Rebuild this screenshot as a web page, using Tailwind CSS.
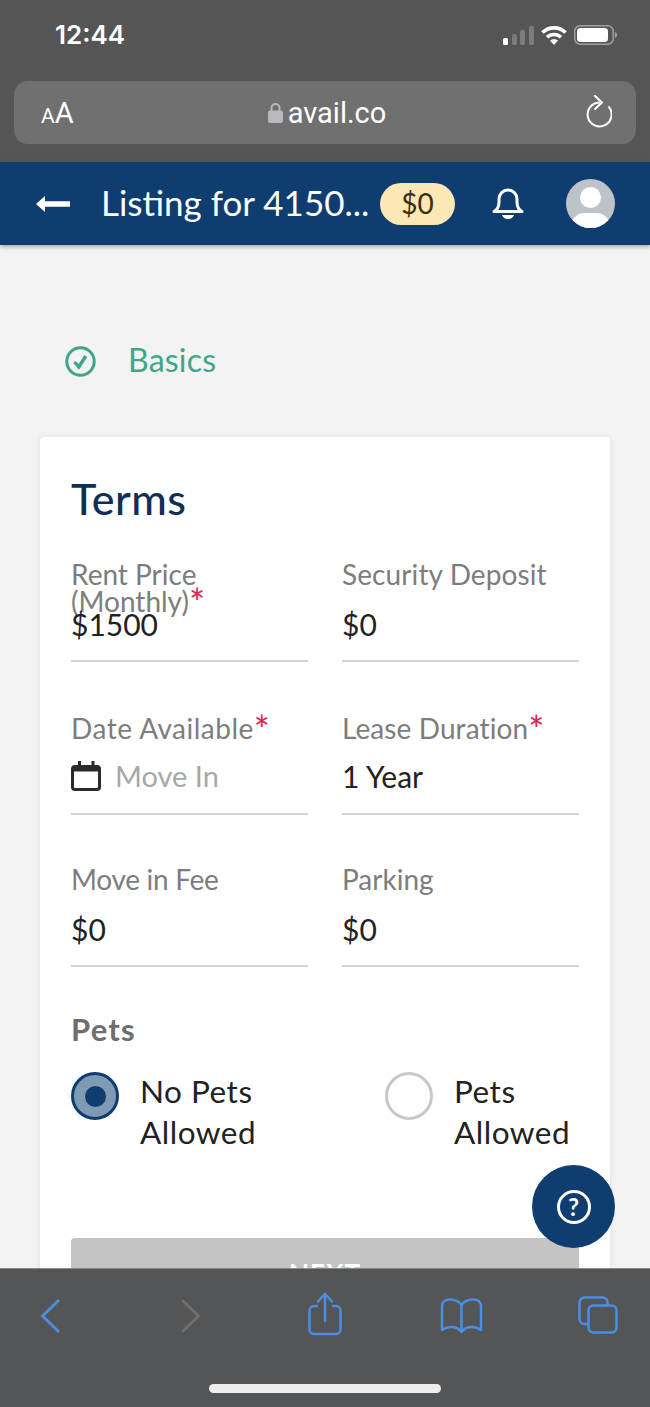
<!DOCTYPE html>
<html lang="en">
<head>
<meta charset="UTF-8">
<meta name="viewport" content="width=device-width, initial-scale=1.0">
<title>Listing for 4150</title>
<script src="https://cdn.jsdelivr.net/npm/@tailwindcss/browser@4"></script>
</head>
<body class="bg-[#f3f3f3]">
<div class="relative flex flex-col h-[1407px] w-[650px] overflow-hidden font-['Lato',sans-serif]">

  <!-- browser top -->
  <div class="h-[162px] shrink-0 bg-[#555555] px-[14px]">
    <div class="h-[81px] flex items-start justify-between pt-[19px] pl-[41px] pr-[20px]">
      <span class="text-white text-[26px] leading-[32px] font-semibold font-['Inter',sans-serif]">12:44</span>
      <div class="flex items-center gap-[7px] h-[32px] -mr-[1px]">
        <svg width="31" height="19" viewBox="0 0 31 19"><rect x="0" y="12" width="5" height="7" rx="1.5" fill="#fff"/><rect x="9" y="8" width="5" height="11" rx="1.5" fill="#7c7c7c"/><rect x="17" y="4" width="5" height="15" rx="1.5" fill="#7c7c7c"/><rect x="26" y="0" width="5" height="19" rx="1.5" fill="#7c7c7c"/></svg>
        <svg width="26" height="20" viewBox="0 0 26 20" fill="none" stroke="#fff" stroke-width="3.600"><path d="M1.500 7.500a16.500 16.500 0 0 1 23 0"/><path d="M6 12.300a10 10 0 0 1 14 0"/><path d="M13 20 9 15.600a6 6 0 0 1 8 0z" fill="#fff" stroke="none"/></svg>
        <svg width="43" height="20" viewBox="0 0 43 20" fill="none"><rect x="0.75" y="0.75" width="38.500" height="18.5" rx="5.5" stroke="#a0a0a0" stroke-width="1.5"/><rect x="3" y="3" width="31" height="14" rx="3.500" fill="#fff"/><path d="M41 7v6c1.200-.4 2-1.600 2-3s-.8-2.600-2-3z" fill="#a0a0a0"/></svg>
      </div>
    </div>
    <div class="relative h-[63px] rounded-[14px] bg-[#707070] flex items-center justify-center text-white">
      <span class="absolute left-[27px] top-[17px] text-[29px] leading-[30px] font-['Roboto',sans-serif]"><span class="text-[21px]">A</span>A</span>
      <svg class="ml-[4px] mr-[5px]" width="15" height="21" viewBox="0 0 15 21" fill="none"><path d="M3.500 9V6a4 4 0 0 1 8 0v3" stroke="#b9b9bd" stroke-width="2"/><rect x="0" y="8.500" width="15" height="12.500" rx="2" fill="#b9b9bd"/></svg>
      <span class="text-[29px] leading-[34px] font-['Roboto',sans-serif] font-normal">avail.co</span>
      <svg class="absolute right-[24px] top-[14px]" width="28" height="33" viewBox="0 0 28 33" fill="none" stroke="#fff" stroke-width="2"><path d="M15 7.500A12 12 0 1 0 25 12" stroke-linecap="round"/><path d="M11 1 18 7.500 11 14" stroke-linecap="round" stroke-linejoin="round"/></svg>
    </div>
  </div>

  <!-- app header -->
  <div class="relative z-10 h-[83px] shrink-0 bg-[#0f3d70] shadow-[0_2px_4px_rgba(0,0,0,0.3)] flex items-center text-white">
    <svg class="ml-[36px]" width="34" height="16" viewBox="0 0 34 16" fill="#fff"><path d="M0 8 9 0V5.200H34V10.800H9V16z"/></svg>
    <span class="ml-[31px] w-[280px] -mt-[4px] text-[35px] leading-[40px] whitespace-nowrap">Listing for 4150...</span>
    <span class="-ml-[1px] w-[75px] h-[42px] rounded-full bg-[#fbe8b4] text-[#3c2f12] text-[28px] leading-[40px] text-center">$0</span>
    <svg class="ml-[37px]" width="32" height="31" viewBox="0 0 32 31" fill="none"><path d="M2 23.500C6 21.500 7 18 7 14v-3a9 9 0 0 1 18 0v3c0 4 1 7.500 5 9.500z" stroke="#fff" stroke-width="3" stroke-linejoin="round"/><path d="M10 27h12c-1 2.800-3 4-6 4s-5-1.200-6-4z" fill="#fff"/></svg>
    <div class="relative ml-[42px] w-[49px] h-[49px] rounded-full bg-[#bdc3c9] overflow-hidden">
      <div class="mx-auto mt-[8px] w-[21px] h-[21px] rounded-full bg-white"></div>
      <div class="absolute left-[4px] top-[34px] w-[41px] h-[30px] rounded-full bg-white"></div>
    </div>
  </div>

  <!-- page -->
  <div class="flex-1 min-h-0 overflow-hidden px-[40px]">
    <div class="flex items-center h-[36px] mt-[98px] pl-[25px] text-[#3fa68a]">
      <svg width="31" height="31" viewBox="0 0 31 31" fill="none" stroke="#3fa68a"><circle cx="15.500" cy="15.500" r="13.700" stroke-width="3"/><path d="M9.500 16l4.300 5 7-11" stroke-width="3.400"/></svg>
      <span class="ml-[32px] -mt-[2px] text-[32px] leading-[36px] tracking-[0.2px]">Basics</span>
    </div>

    <div class="mt-[58px] bg-white rounded-[4px] shadow-[0_0_6px_rgba(0,0,0,0.08)] px-[31px] pt-[38px] pb-[40px]">
      <h1 class="text-[43px] leading-[48px] font-medium tracking-[0.5px] text-[#0f2f57]">Terms</h1>

      <div class="mt-[39px] grid grid-cols-2 gap-x-[34px] gap-y-[53px]">
        <div class="h-[100px] border-b-2 border-[#d2d2d2]">
          <label class="block -mt-[1px] h-[27px] text-[28px] leading-[27px] text-[#7d7d7d]">Rent Price (Monthly)<span class="relative top-[5px] text-[#e0224f] text-[38px] leading-[0]">*</span></label>
          <div class="mt-[16px] h-[40px] text-[30px] leading-[40px] text-[#222]">$1500</div>
        </div>
        <div class="h-[100px] border-b-2 border-[#d2d2d2]">
          <label class="block -mt-[1px] h-[27px] text-[28px] leading-[27px] tracking-[0.1px] text-[#7d7d7d]">Security Deposit</label>
          <div class="mt-[16px] h-[40px] text-[30px] leading-[40px] text-[#222]">$0</div>
        </div>
        <div class="h-[100px] border-b-2 border-[#d2d2d2]">
          <label class="block h-[27px] text-[28px] leading-[27px] tracking-[0.5px] text-[#7d7d7d]">Date Available<span class="relative top-[5px] text-[#e0224f] text-[38px] leading-[0]">*</span></label>
          <div class="mt-[14px] h-[40px] flex items-center text-[29px] leading-[40px] text-[#a8a8a8]">
            <svg width="30" height="30" viewBox="0 0 30 30" fill="none"><rect x="1.500" y="5.500" width="27" height="23" rx="2.500" stroke="#2b2b2b" stroke-width="3"/><path d="M1.500 8.500h27" stroke="#2b2b2b" stroke-width="4"/><path d="M8.500 0v7M22 0v7" stroke="#2b2b2b" stroke-width="3"/></svg>
            <span class="ml-[14px]">Move In</span>
          </div>
        </div>
        <div class="h-[100px] border-b-2 border-[#d2d2d2]">
          <label class="block h-[27px] text-[28px] leading-[27px] tracking-[0.1px] text-[#7d7d7d]">Lease Duration<span class="relative top-[5px] text-[#e0224f] text-[38px] leading-[0]">*</span></label>
          <div class="mt-[14px] h-[40px] text-[30px] leading-[40px] text-[#222]">1 Year</div>
        </div>
        <div class="h-[99px] border-b-2 border-[#d2d2d2]">
          <label class="block -mt-[2px] h-[27px] text-[28px] leading-[27px] -tracking-[0.3px] text-[#7d7d7d]">Move in Fee</label>
          <div class="mt-[16px] h-[40px] text-[30px] leading-[40px] text-[#222]">$0</div>
        </div>
        <div class="h-[99px] border-b-2 border-[#d2d2d2]">
          <label class="block -mt-[2px] h-[27px] text-[28px] leading-[27px] text-[#7d7d7d]">Parking</label>
          <div class="mt-[16px] h-[40px] text-[30px] leading-[40px] text-[#222]">$0</div>
        </div>
      </div>

      <div class="mt-[44px] text-[31px] leading-[36px] font-bold tracking-[1.2px] text-[#6e6e6e]">Pets</div>
      <div class="mt-[25px] flex text-[31.5px] leading-[41px] tracking-[0.5px] text-[#222]">
        <div class="w-[314px] flex">
          <span class="shrink-0 w-[48px] h-[48px] rounded-full border-[3px] border-[#0f3d70] bg-[#8099b5] flex items-center justify-center"><span class="w-[21px] h-[21px] rounded-full bg-[#0f3d70]"></span></span>
          <span class="ml-[21px] -mt-[1px]">No Pets<br>Allowed</span>
        </div>
        <div class="flex">
          <span class="shrink-0 w-[48px] h-[48px] rounded-full border-[3px] border-[#c8c8c8] bg-white"></span>
          <span class="ml-[21px] -mt-[1px]">Pets<br>Allowed</span>
        </div>
      </div>

      <button class="mt-[85px] w-full h-[70px] rounded-[4px] bg-[#c4c4c4] text-white text-[26px] font-bold tracking-[1px]">NEXT</button>
    </div>
  </div>

  <!-- help -->
  <div class="absolute z-10 left-[532px] top-[1165px] w-[83px] h-[83px] rounded-full bg-[#0f3d70] flex items-center justify-center">
    <span class="w-[34px] h-[34px] rounded-full border-[3px] border-white text-white text-[24px] leading-[28px] font-bold text-center">?</span>
  </div>

  <!-- browser bottom -->
  <div class="relative z-20 h-[139px] shrink-0 bg-[#545556] border-t border-[#8a8a8a]">
    <div class="relative h-[80px]">
      <svg class="absolute left-[40px] top-[30px]" width="20" height="34" viewBox="0 0 20 34" fill="none" stroke="#4a8fe3" stroke-width="3"><path d="M18 2 2.500 17 18 32" stroke-linecap="round" stroke-linejoin="round"/></svg>
      <svg class="absolute left-[181px] top-[30px]" width="20" height="34" viewBox="0 0 20 34" fill="none" stroke="#6e6e6e" stroke-width="3"><path d="M2 2 17.500 17 2 32" stroke-linecap="round" stroke-linejoin="round"/></svg>
      <svg class="absolute left-[308px] top-[23px]" width="34" height="44" viewBox="0 0 34 44" fill="none" stroke="#4a8fe3" stroke-width="2.500"><path d="M10 14H6a4.500 4.500 0 0 0-4.500 4.500v19A4.500 4.500 0 0 0 6 42h22a4.500 4.500 0 0 0 4.500-4.500v-19A4.500 4.500 0 0 0 28 14h-4"/><path d="M17 29V2M10 9.500 17 2 24 9.500" stroke-linecap="round" stroke-linejoin="round"/></svg>
      <svg class="absolute left-[440px] top-[29px]" width="43" height="36" viewBox="0 0 43 36" fill="none" stroke="#4a8fe3" stroke-width="2.500"><path d="M21.500 7C20 4 15 1.500 10 1.500 5 1.500 2 4 2 8V32C8 27.500 17 28 21.500 34 26 28 35 27.500 41 32V8C41 4 38 1.500 33 1.500 28 1.500 23 4 21.500 7z" stroke-linejoin="round"/><path d="M21.500 7v27"/></svg>
      <svg class="absolute left-[578px] top-[27px]" width="40" height="38" viewBox="0 0 40 38" fill="none" stroke="#4a8fe3" stroke-width="2.500"><rect x="10.500" y="9.500" width="28" height="27" rx="5"/><path d="M10.500 28H6.500a5 5 0 0 1-5-5V6.500a5 5 0 0 1 5-5H24.500a5 5 0 0 1 5 5v3"/></svg>
    </div>
    <div class="mx-auto mt-[35px] w-[232px] h-[9px] rounded-full bg-[#eeeeee]"></div>
  </div>
</div>
</body>
</html>
